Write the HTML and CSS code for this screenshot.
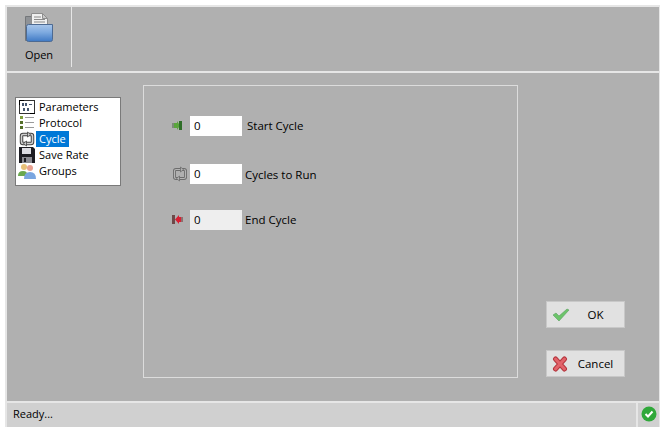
FILE: index.html
```html
<!DOCTYPE html>
<html lang="en">
<head>
    <meta charset="UTF-8">
    <title>Cycle</title>
    <link rel="stylesheet" href="styles.css">
</head>
<body>

<div class="window">
    <div class="toolbar">
        <div class="tool">
            <svg class="tool-icon" width="30" height="30" viewBox="0 0 30 30">
                <defs>
                    <linearGradient id="folder" x1="0" y1="0" x2="0" y2="1">
                        <stop offset="0" stop-color="#a9c6ea"/>
                        <stop offset=".45" stop-color="#7fabe0"/>
                        <stop offset="1" stop-color="#3f79c4"/>
                    </linearGradient>
                </defs>
                <path d="M1.500 3.500h7v24h-7z" fill="#8f9296" stroke="#74777a"/>
                <path d="M7.500 .5h11l5 5V14h-16z" fill="#f0f0f0" stroke="#8e8e8e"/>
                <path d="M18.500 .5v5h5z" fill="#c9c9c9" stroke="#8e8e8e"/>
                <path d="M10 4h7M10 6.500h11M10 9h11" stroke="#8a8a8a"/>
                <path d="M4.500 11.500h24v15q0 2-2 2h-22q-2 0-2-2v-13q0-2 2-2z" fill="url(#folder)" stroke="#4d6a92"/>
            </svg>
            <span>Open</span>
        </div>
    </div>

    <div class="main">
        <ul class="nav">
            <li>
                <svg width="18" height="16" viewBox="0 0 18 16">
                    <rect x="1.500" y="1.500" width="15" height="13" fill="#fff" stroke="#333"/>
                    <path d="M1 1h5v1H2v4H1zM12 14h5v1h-5z" fill="#000"/>
                    <path d="M4 4h2v3H4zM7 4h2v3H7zM11 5h3v1h-3zM5 9h2v3H5zM9 9h2v3H9z" fill="#46566e"/>
                </svg>
                <span>Parameters</span>
            </li>
            <li>
                <svg width="18" height="16" viewBox="0 0 18 16">
                    <path d="M2 1h3v3H2z" fill="#7fa03c"/>
                    <path d="M2 6h3v3H2zM2 11h3v3H2z" fill="#55702a"/>
                    <path d="M7 2.500h9M7 7.500h9M7 12.500h9" stroke="#9a9a9a"/>
                </svg>
                <span>Protocol</span>
            </li>
            <li>
                <svg width="18" height="16" viewBox="0 0 18 16">
                    <rect x="3.500" y="3.500" width="11" height="9" rx="1.500" fill="#fff" stroke="#444" stroke-width="3.500"/>
                    <rect x="3.500" y="3.500" width="11" height="9" rx="1.500" fill="none" stroke="#d0d0d0" stroke-width="1.500"/>
                    <path d="M9.500 1l3 2.500-3 2.500zM8.500 10l-3 2.500 3 2.500z" fill="#d0d0d0" stroke="#444" stroke-width=".8"/>
                </svg>
                <span class="selected">Cycle</span>
            </li>
            <li>
                <svg width="18" height="16" viewBox="0 0 18 16">
                    <path d="M1 0h14l2 2v14H1z" fill="#1c1c22"/>
                    <path d="M4 1h9v6H4z" fill="#dcdce2"/>
                    <path d="M4 10h10v6H4z" fill="#8b8b92"/>
                    <path d="M6 11h2v4H6z" fill="#1c1c22"/>
                </svg>
                <span>Save Rate</span>
            </li>
            <li>
                <svg width="18" height="16" viewBox="0 0 18 16">
                    <circle cx="6" cy="4" r="3" fill="#e8c078"/>
                    <circle cx="12" cy="5" r="3" fill="#e8a090"/>
                    <path d="M0 13q0-5 5-5t4 5z" fill="#6aa84f"/>
                    <path d="M6 16q0-7 6-7t6 7z" fill="#7aa6e0"/>
                </svg>
                <span>Groups</span>
            </li>
        </ul>

        <div class="panel">
            <div class="field field-start">
                <svg class="field-icon" width="16" height="12" viewBox="0 0 16 12">
                    <path d="M0 3h3v5H0z" fill="#7c8a78"/>
                    <path d="M2 3h3V1l3 4.500L5 10V8H2z" fill="#5aa63c"/>
                    <path d="M7 1h3v9H7z" fill="#2f6e28"/>
                </svg>
                <div class="num">0</div>
                <label class="label-start">Start Cycle</label>
            </div>
            <div class="field field-run">
                <svg class="field-icon" width="16" height="16" viewBox="0 0 16 16">
                    <rect x="2.500" y="3.500" width="11" height="9" rx="1.500" fill="none" stroke="#6c6c6c" stroke-width="3"/>
                    <rect x="2.500" y="3.500" width="11" height="9" rx="1.500" fill="none" stroke="#b4b4b4" stroke-width="1.200"/>
                    <path d="M8.500 1l3 2.500-3 2.500zM7.500 10l-3 2.500 3 2.500z" fill="#b4b4b4" stroke="#6c6c6c" stroke-width=".8"/>
                </svg>
                <div class="num">0</div>
                <label class="label-run">Cycles to Run</label>
            </div>
            <div class="field field-end">
                <svg class="field-icon" width="16" height="12" viewBox="0 0 16 12">
                    <path d="M0 1h3v9H0z" fill="#6e4848"/>
                    <path d="M8 3h3v5H8z" fill="#8e6e6e"/>
                    <path d="M9 3H7V1L3 5.500 7 10V8h2z" fill="#d81e32"/>
                </svg>
                <div class="num num-off">0</div>
                <label>End Cycle</label>
            </div>
        </div>

        <div class="actions">
            <button>
                <svg width="18" height="16" viewBox="0 0 18 16">
                    <path d="M1 8l3-2 3 3 8-7 2 1-10 11z" fill="#6cc46a" stroke="#5aa060" stroke-width=".6"/>
                </svg>
                <span>OK</span>
            </button>
            <button>
                <svg width="18" height="16" viewBox="0 0 18 16">
                    <path d="M3.500 3l9 10M12.500 3l-9 10" stroke="#b5363e" stroke-width="5" stroke-linecap="round"/>
                    <path d="M3.500 3l9 10M12.500 3l-9 10" stroke="#e2636a" stroke-width="3" stroke-linecap="round"/>
                </svg>
                <span>Cancel</span>
            </button>
        </div>
    </div>

    <div class="statusbar">
        <div class="status-text">Ready...</div>
        <div class="status-icon">
            <svg width="16" height="16" viewBox="0 0 16 16">
                <circle cx="8" cy="8" r="7.500" fill="#2fa83a"/>
                <path d="M4.500 8l2.500 2.500 4.500-5" fill="none" stroke="#fff" stroke-width="2"/>
            </svg>
        </div>
    </div>
</div>

</body>
</html>
```

FILE: styles.css
```css
html, body {
    margin: 0;
    background-color: #fff;
}

body {
    font-family: "Open Sans", "Noto Sans", sans-serif;
    font-size: 11px;
    color: #000;
}

.window {
    width: 655px;
    height: 422px;
    margin: 5px 0 0 5px;
    border: 2px solid #e6e6e6;
    border-bottom: none;
    border-right-width: 1px;
    background-color: #b0b0b0;
    box-sizing: border-box;
    display: flex;
    flex-direction: column;
}

.toolbar {
    height: 66px;
    flex: none;
    box-sizing: border-box;
    border-bottom: 2px solid #e6e6e6;
    display: flex;
}

.tool {
    width: 64px;
    height: 60px;
    border-right: 1px solid #e6e6e6;
    display: flex;
    flex-direction: column;
    align-items: center;
}

.tool-icon {
    margin-top: 6px;
}

.tool span {
    margin-top: 4px;
}

.main {
    flex: 1;
    display: flex;
    align-items: flex-start;
    min-height: 0;
}

.nav {
    list-style: none;
    width: 106px;
    height: 89px;
    box-sizing: border-box;
    margin: 24px 0 0 8px;
    padding: 1px 0 0 2px;
    background-color: #fff;
    border: 1px solid #7a7a7a;
}

.nav li {
    height: 16px;
    display: flex;
    align-items: center;
    line-height: 16px;
}

.nav li span {
    padding: 0 2px 0 3px;
}

.nav .selected {
    background-color: #0078d7;
    color: #fff;
    padding-right: 3px;
}

.panel {
    width: 375px;
    height: 293px;
    box-sizing: border-box;
    margin: 12px 0 0 22px;
    border: 1px solid #dcdcdc;
}

.field {
    display: flex;
    align-items: center;
    height: 20px;
    margin-left: 28px;
    line-height: 18px;
    font-size: 11.5px;
}

.field-start {
    margin-top: 30px;
}

.field-run {
    margin-top: 28px;
}

.field-end {
    margin-top: 26px;
}

.field-icon {
    width: 16px;
    margin-right: 2px;
}

.num {
    width: 52px;
    height: 20px;
    line-height: 20px;
    padding-left: 4px;
    box-sizing: border-box;
    background-color: #fff;
    margin-right: 3px;
}

.num-off {
    background-color: #eeeeee;
}

.label-start {
    margin-left: 2px;
}

.label-run {
    margin-top: 2px;
}

.actions {
    margin: 228px 0 0 28px;
    display: flex;
    flex-direction: column;
    gap: 22px;
}

button {
    width: 79px;
    height: 27px;
    padding: 0 3px 0 5px;
    border: 1px solid #c8c8c8;
    background-color: #e1e1e1;
    font: inherit;
    font-size: 11.5px;
    color: inherit;
    display: flex;
    align-items: center;
}

button span {
    flex: 1;
    text-align: center;
}

.statusbar {
    height: 26px;
    flex: none;
    box-sizing: border-box;
    border-top: 2px solid #e6e6e6;
    background-color: #d0d0d0;
    display: flex;
}

.status-text {
    flex: 1;
    padding: 3px 0 0 6px;
}

.status-icon {
    width: 23px;
    box-sizing: border-box;
    border-left: 2px solid #e6e6e6;
    padding: 3px 0 0 3px;
}
```
